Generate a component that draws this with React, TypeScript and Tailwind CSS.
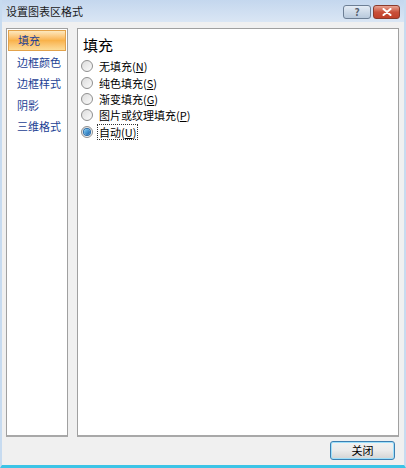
import { useState } from "react"

const font = { fontFamily: '"Noto Sans CJK SC", "Liberation Sans", sans-serif' }

const navItems = ["填充", "边框颜色", "边框样式", "阴影", "三维格式"]

const options = [
  { label: "无填充", key: "N" },
  { label: "纯色填充", key: "S" },
  { label: "渐变填充", key: "G" },
  { label: "图片或纹理填充", key: "P" },
  { label: "自动", key: "U" },
]

function Radio({ checked }: { checked: boolean }) {
  return (
    <span className="relative flex h-[12px] w-[12px] shrink-0 items-center justify-center rounded-full border border-[#8f8f8f] bg-gradient-to-br from-[#dcdcdc] to-[#fbfbfb]">
      {checked && (
        <span className="h-[6px] w-[6px] rounded-full bg-gradient-to-br from-[#7fd0f8] to-[#0f5ea8] ring-1 ring-[#2a6ca8]" />
      )}
    </span>
  )
}

export default function App() {
  const [selected, setSelected] = useState(4)
  const [nav, setNav] = useState(0)

  return (
    <div
      className="flex h-[468px] w-[406px] flex-col border-x-2 border-b-[3px] border-x-[#c7dbf0] border-b-[#3cc4e6] bg-[#f0f0f0] text-[11px] text-black"
      style={font}
    >
      {/* title bar */}
      <div className="flex h-[22px] items-center bg-gradient-to-b from-[#c4d7ee] to-[#dae6f4] pl-[4px] pr-[4px]">
        <span className="text-[11px] leading-none text-[#1a1a1a]">设置图表区格式</span>
        <div className="ml-auto flex gap-[2px] pt-[1px]">
          <div className="flex h-[14px] w-[28px] items-center justify-center rounded-[3px] border border-[#6d7f95] bg-gradient-to-b from-[#e4ecf5] to-[#b8c9dc] text-[10px] font-bold leading-none text-[#56606c]">
            ?
          </div>
          <div className="flex h-[14px] w-[27px] items-center justify-center rounded-[3px] border border-[#8a3a2c] bg-gradient-to-b from-[#e8a393] via-[#c9503a] to-[#c0402a]">
            <svg width="10" height="8" viewBox="0 0 10 8">
              <path d="M1.5 1 L8.5 7 M8.5 1 L1.5 7" stroke="white" strokeWidth="2" strokeLinecap="round" />
            </svg>
          </div>
        </div>
      </div>

      {/* body */}
      <div className="flex flex-1 flex-col px-[4px] pt-[6px]">
        <div className="flex h-[409px] gap-[9px]">
          <div className="flex w-[62px] flex-col border border-[#a0a0a0] border-b-2 border-b-[#a8a8a8] bg-white p-[1px]">
            {navItems.map((item, i) => (
              <div
                key={item}
                onClick={() => setNav(i)}
                className={`flex h-[21.4px] cursor-default items-center pl-[9px] text-[11px] text-[#1c3f94] ${
                  i === nav
                    ? "border border-[#e3a24a] bg-gradient-to-b from-[#fde8bd] via-[#f9b24a] to-[#fcdc98] pl-[8px] text-[#1a1a5a]"
                    : ""
                }`}
              >
                {item}
              </div>
            ))}
          </div>

          <div className="flex w-[322px] flex-col border border-[#a0a0a0] border-b-2 border-b-[#a8a8a8] bg-white pl-[3px] pt-[3px]">
            <div className="pl-[2px] text-[15px] leading-[26px]">填充</div>
            <div className="flex flex-col">
              {options.map((opt, i) => (
                <div
                  key={opt.key}
                  onClick={() => setSelected(i)}
                  className="flex h-[16.4px] cursor-default items-center gap-[4px]"
                >
                  <Radio checked={i === selected} />
                  <span
                    className={`px-[1px] leading-[14px] ${
                      i === selected ? "border border-dotted border-[#333]" : "border border-transparent"
                    }`}
                  >
                    {opt.label}(<span className="underline">{opt.key}</span>)
                  </span>
                </div>
              ))}
            </div>
          </div>
        </div>

        <div className="flex justify-end pr-[5px] pt-[4px]">
          <button className="flex h-[19px] w-[65px] items-center justify-center rounded-[3px] border border-[#3c7fb1] bg-gradient-to-b from-[#f2f2f2] via-[#ebebeb] to-[#d4d4d4] text-[11px] leading-none shadow-[inset_0_0_0_1px_#9ee0fb]">
            关闭
          </button>
        </div>
      </div>
    </div>
  )
}
